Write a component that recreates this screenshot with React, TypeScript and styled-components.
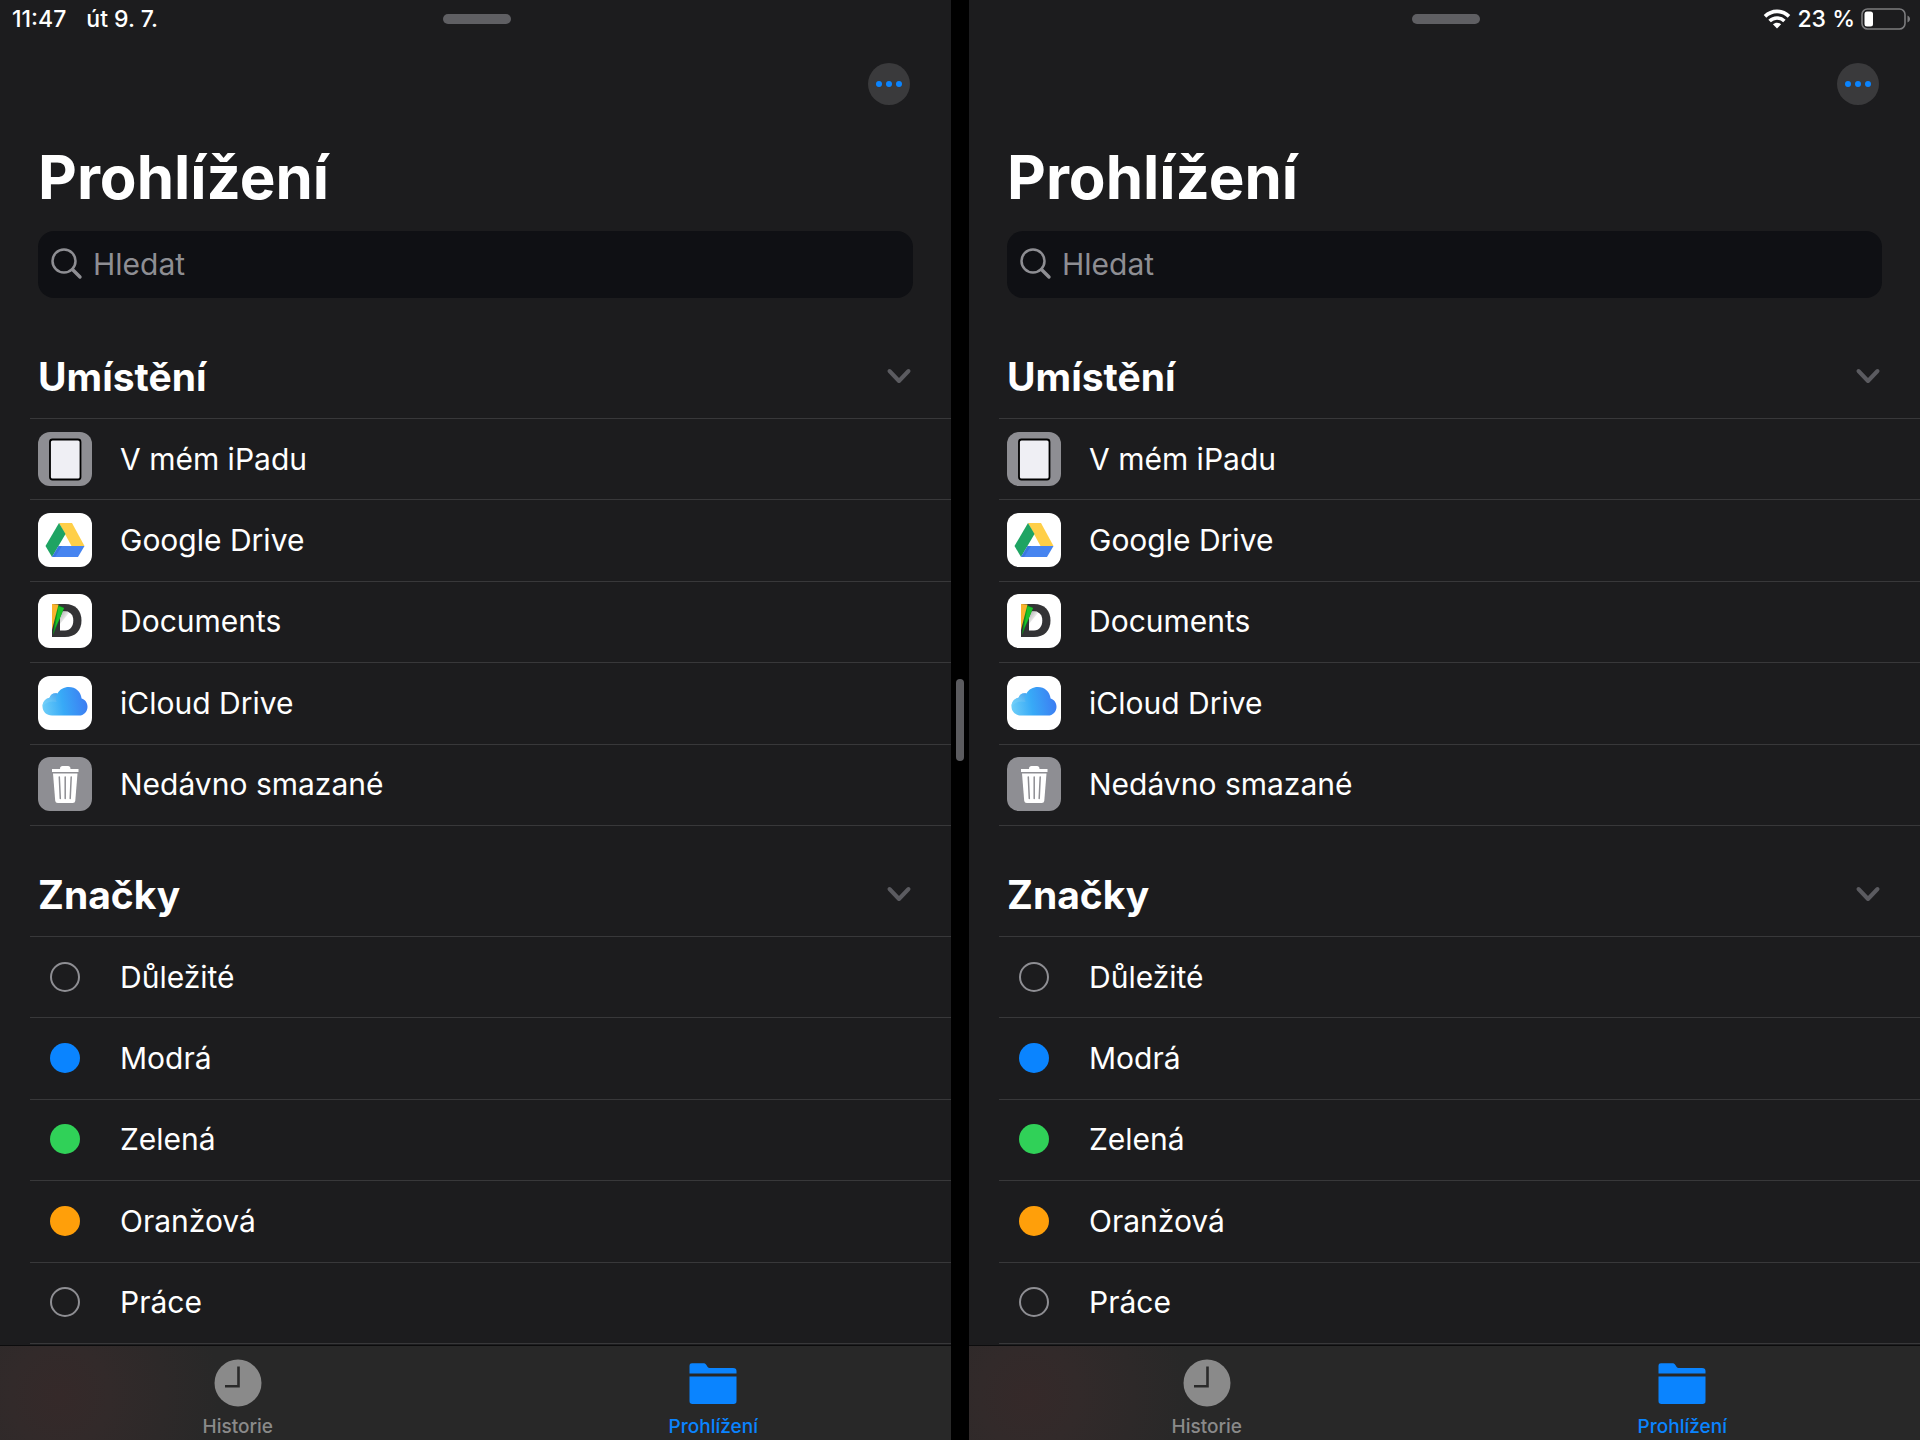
import React, { useId, useState } from "react";
import styled, { createGlobalStyle } from "styled-components";

const GlobalStyle = createGlobalStyle`
  *, *::before, *::after { box-sizing: border-box; }
  body {
    margin: 0;
    background: #000;
    color: #fff;
    font-family: Inter, "Liberation Sans", sans-serif;
  }
  button, input { font: inherit; color: inherit; }
`;

const Screen = styled.div`
  display: flex;
  height: 100vh;
  overflow: hidden;
`;

const Divider = styled.div`
  flex: none;
  width: 18px;
  display: grid;
  place-items: center;
  background: #000;
`;

const DividerHandle = styled.div`
  width: 8px;
  height: 82px;
  border-radius: 4px;
  background: #5b5b5f;
`;

const Pane = styled.main`
  flex: 1;
  min-width: 0;
  display: flex;
  flex-direction: column;
  background: #1c1c1e;
`;

const StatusBar = styled.div`
  flex: none;
  display: grid;
  grid-template-columns: 1fr auto 1fr;
  align-items: center;
  height: 38px;
  padding: 0 9px 0 12px;
  font-size: 23px;
  line-height: 36px;
  font-weight: 500;
`;

const StatusLeft = styled.div`
  display: flex;
  gap: 20px;
`;

const StatusRight = styled.div`
  display: flex;
  align-items: center;
  justify-content: flex-end;
  grid-column: 3;
  gap: 6px;
`;

const Grabber = styled.div`
  grid-column: 2;
  width: 68px;
  height: 10px;
  border-radius: 5px;
  background: #5f5f63;
`;

const Toolbar = styled.div`
  flex: none;
  display: flex;
  justify-content: flex-end;
  padding: 25px 41px 0;
`;

const MoreButton = styled.button`
  display: grid;
  place-items: center;
  width: 42px;
  height: 42px;
  padding: 0;
  border: 0;
  border-radius: 50%;
  background: #3a3a3c;
`;

const Title = styled.h1`
  flex: none;
  margin: 36px 38px 18px;
  font-size: 60px;
  line-height: 72px;
  font-weight: 700;
`;

const SearchField = styled.label`
  flex: none;
  display: flex;
  align-items: center;
  gap: 10px;
  height: 67px;
  margin: 0 38px;
  padding: 0 12px 2px;
  border-radius: 16px;
  background: #0f1014;
`;

const SearchInput = styled.input`
  flex: 1;
  min-width: 0;
  padding: 0;
  border: 0;
  outline: 0;
  background: transparent;
  font-size: 30px;
  &::placeholder { color: #8e8e93; opacity: 1; }
`;

const Content = styled.div`
  flex: 1;
  min-height: 0;
  overflow: hidden;
  display: flex;
  flex-direction: column;
  gap: 26px;
  padding-top: 36px;
`;

const Section = styled.section`
  flex: none;
`;

const SectionHeading = styled.h2`
  margin: 0;
  font-size: 39px;
  font-weight: 700;
`;

const SectionToggle = styled.button`
  display: flex;
  align-items: center;
  justify-content: space-between;
  width: 100%;
  height: 84px;
  padding: 0 39px 0 38px;
  border: 0;
  background: none;
  text-align: left;
`;

const Chevron = styled.svg<{ $open: boolean }>`
  transform: ${(p) => (p.$open ? "none" : "rotate(-90deg)")};
`;

const List = styled.ul`
  display: grid;
  grid-auto-rows: 1fr;
  min-height: 408px;
  margin: 0 0 0 30px;
  padding: 0;
  border-top: 1px solid #38383a;
  list-style: none;
`;

const Item = styled.li`
  display: flex;
  border-bottom: 1px solid #38383a;
`;

const RowButton = styled.button`
  flex: 1;
  display: flex;
  align-items: center;
  gap: 28px;
  padding: 0 8px 1px;
  border: 0;
  background: none;
  font-size: 30px;
  text-align: left;
`;

const RowIcon = styled.span<{ $fill?: string }>`
  flex: none;
  display: grid;
  place-items: center;
  width: 54px;
  height: 54px;
  border-radius: 12px;
  background: ${(p) => p.$fill ?? "transparent"};
`;

const TagDot = styled.span<{ $color?: string }>`
  width: 30px;
  height: 30px;
  border-radius: 50%;
  background: ${(p) => p.$color ?? "transparent"};
  border: ${(p) => (p.$color ? "0" : "2px solid #8e8e93")};
`;

const TabBar = styled.nav`
  flex: none;
  display: flex;
  height: 95px;
  border-top: 1px solid #0c0c0d;
  background: radial-gradient(circle at 60px 50px, #352929 0, #322a2a 50px, #282828 160px);
`;

const Tab = styled.button<{ $active?: boolean }>`
  flex: 1;
  display: flex;
  flex-direction: column;
  align-items: center;
  gap: 8px;
  padding: 13px 0 0;
  border: 0;
  background: none;
  color: ${(p) => (p.$active ? "#0a84ff" : "#8a8a8a")};
  font-size: 19px;
  line-height: 24px;
  font-weight: 500;
`;

const WifiIcon = () => (
  <svg width="28" height="20" viewBox="0 0 28 20" fill="none" stroke="#fff" strokeWidth="3.6" aria-hidden="true">
    <path d="M2 7.4C8.8 .7 19.2 .7 26 7.4" />
    <path d="M6.6 12C10.8 7.900 17.200 7.900 21.400 12" />
    <path d="M14 19.400L9.900 15.300C12.200 13.100 15.800 13.100 18.100 15.300Z" fill="#fff" stroke="none" />
  </svg>
);

const BatteryIcon = () => (
  <svg width="50" height="22" viewBox="0 0 50 22" aria-hidden="true">
    <rect x="1" y="1" width="43" height="20" rx="5.500" fill="none" stroke="#7c7c7e" strokeWidth="1.600" />
    <rect x="3.500" y="3.500" width="8.500" height="15" rx="2.500" fill="#fff" />
    <path d="M46.500 7.500C48.200 8.200 49 9.500 49 11S48.200 13.800 46.500 14.500Z" fill="#7c7c7e" />
  </svg>
);

const DotsIcon = () => (
  <svg width="28" height="8" viewBox="0 0 28 8" fill="#0a84ff" aria-hidden="true">
    <circle cx="4" cy="4" r="3" />
    <circle cx="14" cy="4" r="3" />
    <circle cx="24" cy="4" r="3" />
  </svg>
);

const SearchIcon = () => (
  <svg width="33" height="33" viewBox="0 0 33 33" fill="none" stroke="#8e8e93" aria-hidden="true">
    <circle cx="14" cy="14" r="11.500" strokeWidth="2.500" />
    <path d="M22.500 22.500L30 30" strokeWidth="3.400" strokeLinecap="round" />
  </svg>
);

const IpadIcon = () => (
  <svg width="54" height="54" viewBox="0 0 54 54" aria-hidden="true">
    <rect x="12" y="7.500" width="30.500" height="40" rx="2.500" fill="#efeff4" stroke="#000" strokeWidth="1.800" />
  </svg>
);

const DriveIcon = () => (
  <svg width="54" height="54" viewBox="0 0 54 54" aria-hidden="true">
    <path d="M21 10H34L46.500 33H33.500Z" fill="#ffcf48" />
    <path d="M21 10L7.500 33L14 44L27.500 21Z" fill="#1fa463" />
    <path d="M20.500 33H46.500L40 44H14Z" fill="#4684f0" />
    <path d="M14 44L20.500 33H24L17 44Z" fill="#2f6ad0" opacity=".5" />
  </svg>
);

const DocumentsIcon = () => {
  const id = useId();
  return (
    <svg width="54" height="54" viewBox="0 0 54 54" aria-hidden="true">
      <defs>
        <linearGradient id={id} x1="0" y1="0" x2="1" y2="1">
          <stop offset="0" stopColor="#a8a8a8" />
          <stop offset=".7" stopColor="#fff" />
        </linearGradient>
      </defs>
      <path d="M14 10H27C37.500 10 43.500 16.500 43.500 26.500S37.500 43 27 43H14Z" fill="#333335" />
      <path d="M22 17.500H27C32.500 17.500 35.300 21 35.300 26.500S32.500 36.500 27 36.500H22Z" fill="#fff" />
      <path d="M22 17.500H30L31 19L22 30Z" fill={`url(#${id})`} />
      <path d="M19 10.500L26 14L15 41Z" fill="#0b9a1a" />
      <path d="M20.500 12.500L26 14L21.500 25L17 34Z" fill="#1cc22a" />
      <path d="M14 10L20.500 10.500L14 36Z" fill="#f9b32d" />
    </svg>
  );
};

const CloudIcon = () => {
  const id = useId();
  return (
    <svg width="54" height="54" viewBox="0 0 54 54" aria-hidden="true">
      <defs>
        <linearGradient id={`${id}a`} x1="0" y1=".7" x2="1" y2=".6">
          <stop offset="0" stopColor="#6ccdf8" />
          <stop offset=".45" stopColor="#38aaf7" />
          <stop offset="1" stopColor="#3c7cf2" />
        </linearGradient>
        <linearGradient id={`${id}b`} x1="0" y1="1" x2="1" y2="0">
          <stop offset="0" stopColor="#78d6fa" />
          <stop offset=".5" stopColor="#6cc6f6" />
          <stop offset="1" stopColor="#4a9cea" />
        </linearGradient>
      </defs>
      <path
        d="M14 39.500C8.500 39.500 4.500 35.500 4.500 30.500C4.500 26 7.500 22.500 11.500 21.700C13 17.800 16 16.500 19.500 17.500C21.800 13.300 26 11 30.800 11C37.700 11 42.800 15.700 43.600 22.500C47.200 23.700 49.500 26.900 49.500 30.700C49.500 35.700 45.800 39.500 41 39.500Z"
        fill={`url(#${id}a)`}
      />
      <path
        d="M18.600 26C17.200 23.200 17.500 20.200 19.500 17.500C16 16.500 13 17.800 11.500 21.700C7.500 22.500 4.500 26 4.500 30.500C8 26 13.500 24.500 18.600 26Z"
        fill={`url(#${id}b)`}
        opacity=".7"
      />
    </svg>
  );
};

const TrashIcon = () => (
  <svg width="54" height="54" viewBox="0 0 54 54" aria-hidden="true">
    <path d="M14 12H22C22 9.800 23 9 24.500 9H30C31.500 9 32.500 9.800 32.500 12H40.500V15H14Z" fill="#fff" />
    <path d="M15 16.500H39.500L37.300 43.500C37.100 45.200 36.200 46 34.700 46H19.800C18.300 46 17.400 45.200 17.200 43.500Z" fill="#fff" />
    <path d="M21.300 20L22.300 41.500M27.200 20V41.500M33.200 20L32.200 41.500" stroke="#8e8e93" strokeWidth="1.500" strokeLinecap="round" />
  </svg>
);

const ClockIcon = () => (
  <svg width="48" height="48" viewBox="0 0 48 48" aria-hidden="true">
    <circle cx="24" cy="24" r="23.500" fill="#8a8a8a" />
    <path d="M24.500 7.500V27.200H11" fill="none" stroke="#2a2a2a" strokeWidth="2.600" />
  </svg>
);

const FolderIcon = () => (
  <svg width="48" height="48" viewBox="0 0 48 48" fill="#0a84ff" aria-hidden="true">
    <path d="M.5 14.500V7C.5 5 1.500 4.300 3 4.300H15C17.500 4.300 18 9 20.500 9H44C46.500 9 47.500 10 47.500 12V14.500Z" />
    <path d="M.5 17.500H47.500V42C47.500 44.200 46.500 45 44.500 45H3.500C1.500 45 .5 44.200 .5 42Z" />
  </svg>
);

const LOCATIONS = [
  { name: "V mém iPadu", fill: "#8e8e93", icon: <IpadIcon /> },
  { name: "Google Drive", fill: "#fff", icon: <DriveIcon /> },
  { name: "Documents", fill: "#fff", icon: <DocumentsIcon /> },
  { name: "iCloud Drive", fill: "#fff", icon: <CloudIcon /> },
  { name: "Nedávno smazané", fill: "#8e8e93", icon: <TrashIcon /> },
];

const TAGS: { name: string; color?: string }[] = [
  { name: "Důležité" },
  { name: "Modrá", color: "#0a84ff" },
  { name: "Zelená", color: "#30d158" },
  { name: "Oranžová", color: "#ff9f0a" },
  { name: "Práce" },
];

function CollapsibleSection({ title, children }: { title: string; children: React.ReactNode }) {
  const [open, setOpen] = useState(true);
  return (
    <Section>
      <SectionHeading>
        <SectionToggle type="button" aria-expanded={open} onClick={() => setOpen(!open)}>
          {title}
          <Chevron $open={open} width="26" height="18" viewBox="0 0 26 18" fill="none" aria-hidden="true">
            <path d="M3.500 4L13 14L22.500 4" stroke="#5b5b60" strokeWidth="4" strokeLinecap="round" strokeLinejoin="round" />
          </Chevron>
        </SectionToggle>
      </SectionHeading>
      {open && <List>{children}</List>}
    </Section>
  );
}

function FilesPane({ left, right }: { left?: React.ReactNode; right?: React.ReactNode }) {
  const searchId = useId();
  return (
    <Pane>
      <StatusBar>
        {left}
        <Grabber />
        {right}
      </StatusBar>
      <Toolbar>
        <MoreButton type="button" aria-label="Další">
          <DotsIcon />
        </MoreButton>
      </Toolbar>
      <Title>Prohlížení</Title>
      <SearchField htmlFor={searchId}>
        <SearchIcon />
        <SearchInput id={searchId} type="text" placeholder="Hledat" aria-label="Hledat" />
      </SearchField>
      <Content>
        <CollapsibleSection title="Umístění">
          {LOCATIONS.map((item) => (
            <Item key={item.name}>
              <RowButton type="button">
                <RowIcon $fill={item.fill}>{item.icon}</RowIcon>
                {item.name}
              </RowButton>
            </Item>
          ))}
        </CollapsibleSection>
        <CollapsibleSection title="Značky">
          {TAGS.map((tag) => (
            <Item key={tag.name}>
              <RowButton type="button">
                <RowIcon>
                  <TagDot $color={tag.color} />
                </RowIcon>
                {tag.name}
              </RowButton>
            </Item>
          ))}
        </CollapsibleSection>
      </Content>
      <TabBar>
        <Tab type="button">
          <ClockIcon />
          Historie
        </Tab>
        <Tab type="button" $active aria-current="page">
          <FolderIcon />
          Prohlížení
        </Tab>
      </TabBar>
    </Pane>
  );
}

export default function App() {
  return (
    <>
      <GlobalStyle />
      <Screen>
        <FilesPane
          left={
            <StatusLeft>
              <span>11:47</span>
              <span>út 9. 7.</span>
            </StatusLeft>
          }
        />
        <Divider>
          <DividerHandle />
        </Divider>
        <FilesPane
          right={
            <StatusRight>
              <WifiIcon />
              <span>23 %</span>
              <BatteryIcon />
            </StatusRight>
          }
        />
      </Screen>
    </>
  );
}
